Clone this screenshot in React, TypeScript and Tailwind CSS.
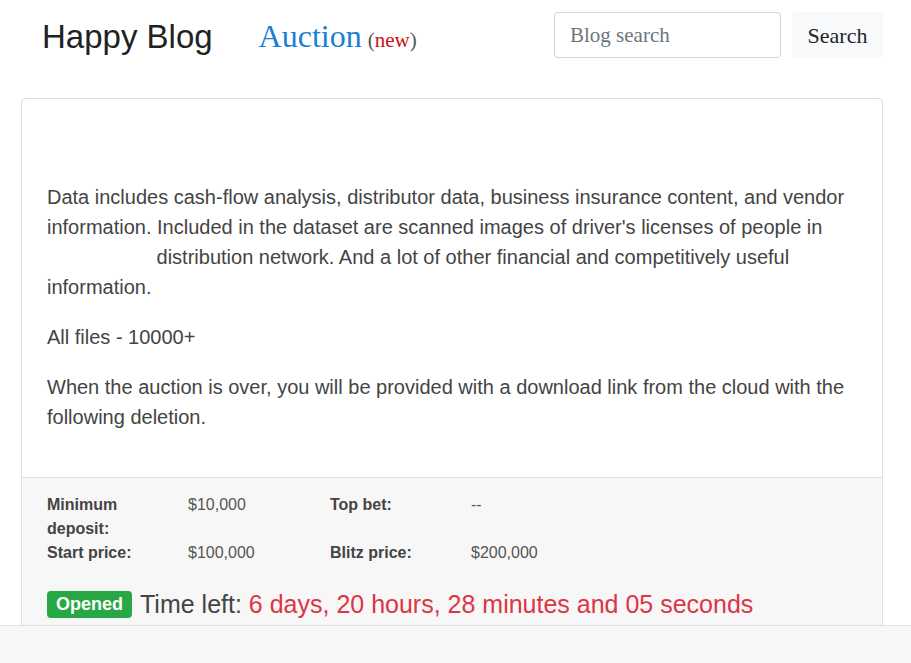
import React from 'react'

const sans = { fontFamily: '"Liberation Sans", Arial, sans-serif' }

export default function App() {
  const details = [
    { label: 'Minimum deposit:', value: '$10,000', label2: 'Top bet:', value2: '--' },
    { label: 'Start price:', value: '$100,000', label2: 'Blitz price:', value2: '$200,000' },
  ]

  return (
    <div className="h-[663px] overflow-hidden flex flex-col bg-white font-['Liberation_Sans',Arial,sans-serif]">
      <div className="flex-1 overflow-hidden ml-[21px] w-[862px]">
        {/* Header */}
        <header className="flex items-center pt-[12px] h-[58px]">
          <a className="ml-[21px] text-[33px] leading-none text-[#222] -mt-[10px] pt-[12px]">Happy Blog</a>
          <a className="ml-[46px] flex items-baseline font-['Liberation_Serif','Times_New_Roman',serif] -mt-[10px] pt-[12px]">
            <span className="text-[32px] leading-none text-[#1a7fd4]">Auction</span>
            <span className="ml-[6px] text-[21px] leading-none text-[#555]">
              (<span className="text-[#cc1111]">new</span>)
            </span>
          </a>
          <div className="ml-auto flex items-center gap-[11px] font-['Liberation_Serif','Times_New_Roman',serif]">
            <input
              placeholder="Blog search"
              className="w-[227px] h-[46px] border border-[#ced4da] rounded-[4px] px-[15px] text-[21px] text-[#495057] placeholder:text-[#6c757d] outline-none"
            />
            <button className="w-[91px] h-[46px] rounded-[4px] bg-[#f8f9fa] text-[22px] text-[#212529]">Search</button>
          </div>
        </header>

        {/* Card */}
        <div className="mt-[40px] border border-[#dfdfdf] rounded-[4px] text-[#444]">
          <div className="pt-[83px] px-[25px] pb-[25px] text-[20px] leading-[30px]">
            <p className="mb-[20px]">
              Data includes cash-flow analysis, distributor data, business insurance content, and vendor information.
              Included in the dataset are scanned images of driver's licenses of people in{' '}
              <span className="inline-block w-[104px]"></span> distribution network. And a lot of other financial and
              competitively useful information.
            </p>
            <p className="mb-[20px]">All files - 10000+</p>
            <p className="mb-[20px]">
              When the auction is over, you will be provided with a download link from the cloud with the following
              deletion.
            </p>
          </div>
          <div className="bg-[#f7f7f7] border-t border-[#dfdfdf] pt-[15px] px-[25px] pb-[20px]">
            <div className="grid grid-cols-[141px_142px_141px_141px] text-[16px] leading-[24px]" style={sans}>
              {details.map(row => (
                <React.Fragment key={row.label}>
                  <div className="font-bold text-[#444] pr-[30px]">{row.label}</div>
                  <div className="text-[#555]">{row.value}</div>
                  <div className="font-bold text-[#444] pr-[30px]">{row.label2}</div>
                  <div className="text-[#555]">{row.value2}</div>
                </React.Fragment>
              ))}
            </div>
            <div className="mt-[21px] flex items-center text-[25px] leading-[36px]">
              <span className="inline-flex items-center h-[27px] px-[9px] rounded-[4px] bg-[#28a745] text-white text-[18px] font-bold">
                Opened
              </span>
              <span className="ml-[8px] text-[#444]">
                Time left: <span className="text-[#dc3545]">6 days, 20 hours, 28 minutes and 05 seconds</span>
              </span>
            </div>
          </div>
        </div>
      </div>

      {/* Bottom bar */}
      <div className="h-[38px] shrink-0 bg-[#f7f7f7] border-t border-[#e3e3e3]"></div>
    </div>
  )
}
